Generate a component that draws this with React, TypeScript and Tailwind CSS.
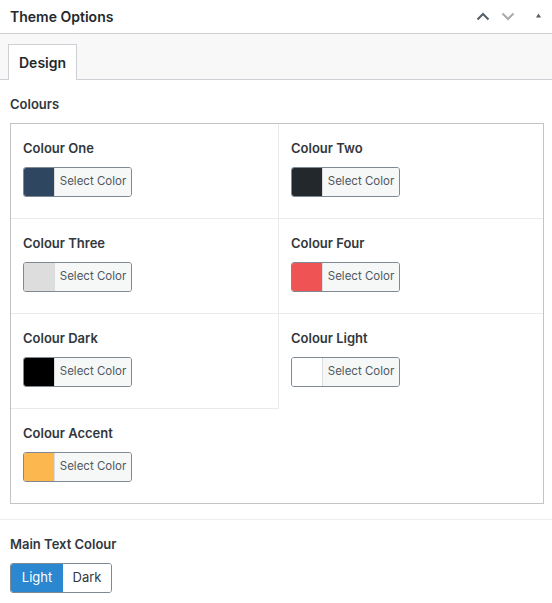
import React from "react";

const colours = [
  { label: "Colour One", color: "#2e4660", cls: "border-b border-r" },
  { label: "Colour Two", color: "#23282d", cls: "border-b" },
  { label: "Colour Three", color: "#dddddd", cls: "border-b border-r" },
  { label: "Colour Four", color: "#f05354", cls: "border-b" },
  { label: "Colour Dark", color: "#000000", cls: "border-b border-r" },
  { label: "Colour Light", color: "#ffffff", cls: "" },
  { label: "Colour Accent", color: "#fcb74f", cls: "" },
];

function ColorButton({ color }: { color: string }) {
  return (
    <div className="flex h-[30px] w-[109px] overflow-hidden rounded-[3px] border border-[#7e8993]">
      <div className="w-[31px] border-r border-[#dcdcde]" style={{ backgroundColor: color }} />
      <div className="flex flex-1 items-center justify-center bg-[#f6f7f7] text-[11.5px] text-[#50575e]">
        Select Color
      </div>
    </div>
  );
}

export default function App() {
  return (
    <div
      className="w-[552px] h-[603px] bg-white text-[#23282d]"
      style={{ fontFamily: "Inter, 'Liberation Sans', sans-serif" }}
    >
      <div className="flex h-[34px] items-center justify-between border-b border-[#ccd0d4] pl-[10px] pr-[11px]">
        <div className="text-[14px] font-semibold">Theme Options</div>
        <div className="flex items-center">
          <svg width="14" height="9" viewBox="0 0 14 9" className="mr-[11px]">
            <path d="M1.5 7.5 L7 2 L12.5 7.5" fill="none" stroke="#555d66" strokeWidth="2" />
          </svg>
          <svg width="14" height="9" viewBox="0 0 14 9" className="mr-[21px]">
            <path d="M1.5 1.5 L7 7 L12.5 1.5" fill="none" stroke="#a7aaad" strokeWidth="2" />
          </svg>
          <svg width="5" height="5" viewBox="0 0 6 6" className="-mt-[3px]">
            <path d="M0 5.5 L3 0.5 L6 5.5 Z" fill="#555d66" />
          </svg>
        </div>
      </div>
      <div className="flex h-[46px] items-end border-b border-[#ccd0d4] bg-[#f8f8f8] pl-[8px]">
        <div className="-mb-px flex h-[36px] items-center border border-b-0 border-[#ccd0d4] bg-white px-[10px] text-[14px] font-semibold">
          Design
        </div>
      </div>
      <div className="pl-[10px] pt-[15px]">
        <div className="text-[13px] font-semibold text-[#32373c]">Colours</div>
        <div className="mt-[8px] grid h-[381px] w-[534px] grid-cols-[268px_1fr] content-start border border-[#c3c4c7]">
          {colours.map((c) => (
            <div
              key={c.label}
              className={`h-[95px] border-[#eaeaea] px-[12px] pt-[14px] ${c.cls}`}
            >
              <div className="h-[20px] text-[13px] font-semibold leading-[20px] text-[#32373c]">
                {c.label}
              </div>
              <div className="mt-[9px]">
                <ColorButton color={c.color} />
              </div>
            </div>
          ))}
        </div>
      </div>
      <div className="mt-[15px] border-t border-[#eeeeee] px-[10px] pt-[14px]">
        <div className="text-[13px] font-semibold leading-[20px] text-[#32373c]">Main Text Colour</div>
        <div className="mt-[9px] flex h-[30px] w-[102px] overflow-hidden rounded-[3px] border border-[#7e8993] text-[13px]">
          <div className="flex w-[52px] items-center justify-center bg-[#2a87d0] text-white">Light</div>
          <div className="flex flex-1 items-center justify-center bg-white text-[#32373c]">Dark</div>
        </div>
      </div>
    </div>
  );
}
